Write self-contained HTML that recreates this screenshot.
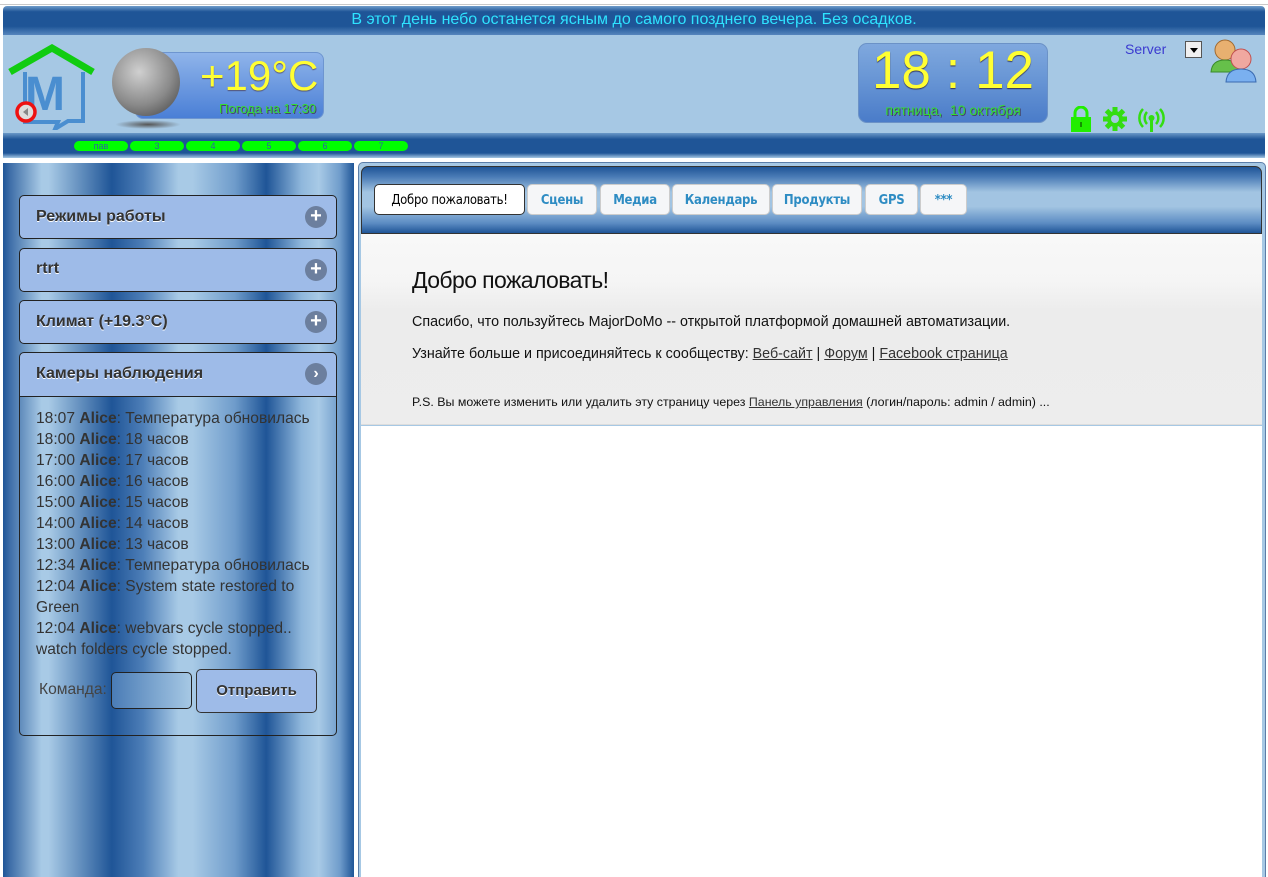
<!DOCTYPE html>
<html><head><meta charset="utf-8">
<style>
*{box-sizing:border-box;margin:0;padding:0}
body{width:1268px;height:877px;overflow:hidden;background:#fff;font-family:"Liberation Sans",Arial,sans-serif;position:relative}
.abs{position:absolute}
#topline{left:0;top:0;width:1268px;height:5px;background:#fff;border-bottom:1px solid #c8c8c8}
#banner{left:3px;top:6px;width:1262px;height:29px;background:linear-gradient(#6f9ccb 0,#1f5597 20%,#1f5597 70%,#5585bd 100%);border-radius:4px 4px 0 0;color:#2ee3ff;font-size:16px;text-align:center;line-height:28px}
#hdr{left:3px;top:35px;width:1262px;height:100px;background:#a6c8e4}
#hbar{left:3px;top:133px;width:1262px;height:25px;background:linear-gradient(#6a98c8 0,#1f5597 25%,#1f5597 80%,#a6c8e4 100%)}
.pill{position:absolute;top:141px;width:54px;height:10px;background:#00ff00;border-radius:5px;font-size:9px;color:#2a6a9a;text-align:center;line-height:10px}
#tempbox{left:135px;top:52px;width:189px;height:67px;border-radius:8px;background:linear-gradient(#8fb4ea,#4a7fd6);border:1px solid #6d95d0}
#moon{left:112px;top:48px;width:68px;height:68px;border-radius:50%;background:radial-gradient(circle at 40% 35%,#d0d0d0,#8a8a8a 55%,#3c3c3c)}
#moonsh{left:115px;top:120px;width:66px;height:9px;border-radius:50%;background:radial-gradient(ellipse,#555 0,rgba(90,90,90,0) 70%)}
#clock{left:858px;top:43px;width:190px;height:80px;border-radius:9px;background:linear-gradient(#7fa8de 0,#6b98d6 40%,#4a7cc9 100%);border:1px solid #6b92c7}
#side{left:3px;top:163px;width:351px;height:714px;background:linear-gradient(90deg,#1f5597 0,#3e6ea8 2%,#a8cae6 11%,#a8cae6 13%,#1f5597 31%,#4e7fb8 40%,#a8cae6 50%,#a8cae6 54%,#6f9ccb 66%,#1f5597 75%,#8fb7dc 85%,#a8cae6 90%,#6f9ccb 96%,#1f5597 100%)}
.acc{position:absolute;left:19px;width:318px;background:#9ebbe8;border:1px solid #222;border-radius:5px;font-weight:bold;font-size:16px;color:#333;padding-left:16px;text-shadow:0 1px 0 #fff}
.pl{position:absolute;right:9px;top:10px;width:22px;height:22px;border-radius:50%;background:#6c7f9e;color:#fff;font-size:20px;line-height:21px;text-align:center;text-shadow:none;font-weight:bold}
#cam{left:19px;top:396px;width:318px;height:340px;border:1px solid #222;border-top:none;border-radius:0 0 5px 5px;padding:12px 0 0 16px;font-size:15.6px;line-height:21px;color:#333}
#main{left:358px;top:162px;width:908px;height:715px;border:1px solid #5a7da8;border-bottom:none;border-radius:5px 5px 0 0;background:#a6c8e4}
#tabbar{left:361px;top:166px;width:901px;height:68px;border:1px solid #333;border-radius:7px 7px 0 0;background:linear-gradient(#1f5597 0,#4a7bb6 15%,#a2c4e2 38%,#a2c4e2 60%,#5c8cc3 85%,#1f5597 100%)}
.tab{position:absolute;top:184px;height:31px;border:1px solid #ccc;border-radius:5px;background:#f5f6f8;color:#2e8cc3;font-weight:bold;font-size:13px;text-align:center;line-height:32px;font-family:"DejaVu Sans Condensed","Liberation Sans Narrow",sans-serif;letter-spacing:-0.3px}
#content{left:361px;top:234px;width:901px;height:191px;background:linear-gradient(#f8f8f8 0,#f5f5f5 25%,#ececec 40%,#ededed 100%);border-bottom:1px solid #ddd;padding:30px 0 0 51px;color:#111}
#white{left:361px;top:426px;width:901px;height:451px;background:#fff}
#content a{color:#333;text-decoration:underline}
</style></head><body>
<div class="abs" id="topline"></div>
<div class="abs" id="banner">В этот день небо останется ясным до самого позднего вечера. Без осадков.</div>
<div class="abs" id="hdr"></div>
<div class="abs" id="hbar"></div>
<svg class="abs" style="left:8px;top:44px" width="88" height="86" viewBox="0 0 88 86">
<path d="M17 28 V78 H50 L47 85 L60 77 H75 V28" fill="none" stroke="#4a8ed0" stroke-width="4"/>
<text x="17" y="66" font-family="Liberation Sans" font-weight="bold" font-size="48" fill="#4a8ed0">M</text>
<path d="M2 28 L44 4 L85 28" fill="none" stroke="#11cc11" stroke-width="7"/>
<circle cx="18" cy="68" r="9" fill="#ddd" stroke="#ee1111" stroke-width="3.5"/>
<path d="M20 64 L15 68 L20 72Z" fill="#888"/>
</svg>
<div class="abs" id="tempbox"></div>
<div class="abs" style="left:200px;top:52px;font-size:42px;color:#ffff33;line-height:48px;text-shadow:0 1px 1px #557">+19°C</div>
<div class="abs" style="left:219px;top:101px;font-size:13px;color:#33dd33;text-shadow:1px 1px 0 #446">Погода на 17:30</div>
<div class="abs" id="moonsh"></div>
<div class="abs" id="moon"></div>
<div class="pill" style="left:74px">пав</div><div class="pill" style="left:130px">3</div><div class="pill" style="left:186px">4</div><div class="pill" style="left:242px">5</div><div class="pill" style="left:298px">6</div><div class="pill" style="left:354px">7</div>
<div class="abs" id="clock"></div>
<div class="abs" style="left:858px;top:42px;width:190px;text-align:center;font-size:53px;color:#ffff33;line-height:58px;text-shadow:0 1px 1px #335">18 : 12</div>
<div class="abs" style="left:858px;top:102px;width:190px;text-align:center;font-size:14px;color:#33dd33;text-shadow:1px 1px 0 #446">пятница,&nbsp; 10 октября</div>
<div class="abs" style="left:1125px;top:41px;font-size:14px;color:#3a3ad0">Server</div>
<div class="abs" style="left:1185px;top:41px;width:17px;height:17px;border:1px solid #555;background:#f0f0f0"><div style="margin:6px auto 0;width:0;height:0;border-left:4px solid transparent;border-right:4px solid transparent;border-top:5px solid #000"></div></div>
<svg class="abs" style="left:1210px;top:38px" width="48" height="46" viewBox="0 0 48 46">
<circle cx="15" cy="12" r="10" fill="#e8b070" stroke="#a06a30"/><path d="M1 34 Q2 22 15 22 Q28 22 29 34Z" fill="#66c04a" stroke="#3a8a2a"/>
<circle cx="31" cy="21" r="10" fill="#f0a8a0" stroke="#c05050"/><path d="M16 44 Q17 31 31 31 Q45 31 46 44Z" fill="#7ab0f0" stroke="#3a6ab0"/>
</svg>
<svg class="abs" style="left:1070px;top:106px" width="100" height="28" viewBox="0 0 100 28">
<rect x="1" y="11" width="20" height="15" fill="#22ee00"/><path d="M5 11 V7 A6 6 0 0 1 17 7 V11" fill="none" stroke="#22ee00" stroke-width="3"/><rect x="10" y="16" width="2" height="5" fill="#139000"/>
<g transform="translate(45,13)" fill="#33dd11"><circle r="8"/><g id="t"><rect x="-2.5" y="-12" width="5" height="6"/></g><use href="#t" transform="rotate(45)"/><use href="#t" transform="rotate(90)"/><use href="#t" transform="rotate(135)"/><use href="#t" transform="rotate(180)"/><use href="#t" transform="rotate(225)"/><use href="#t" transform="rotate(270)"/><use href="#t" transform="rotate(315)"/><circle r="4" fill="#a6c8e4"/></g>
<g stroke="#33dd11" stroke-width="2.5" fill="none"><path d="M77 6 A9 9 0 0 0 77 18"/><path d="M73 3 A13 13 0 0 0 73 21"/><path d="M86 6 A9 9 0 0 1 86 18"/><path d="M90 3 A13 13 0 0 1 90 21"/></g>
<circle cx="81.5" cy="12" r="3" fill="#33dd11"/><rect x="80" y="12" width="3" height="14" fill="#33dd11"/>
</svg>
<div class="abs" id="side"></div>
<div class="acc" style="top:195px;height:44px;line-height:42px">Режимы работы<div class="pl">+</div></div>
<div class="acc" style="top:248px;height:44px;line-height:40px">rtrt<div class="pl">+</div></div>
<div class="acc" style="top:300px;height:44px;line-height:42px">Климат (+19.3°C)<div class="pl">+</div></div>
<div class="acc" style="top:352px;height:45px;line-height:42px;border-radius:5px 5px 0 0">Камеры наблюдения<div class="pl" style="font-size:16px">›</div></div>
<div class="abs" id="cam">18:07 <b>Alice</b>: Температура обновилась<br>18:00 <b>Alice</b>: 18 часов<br>17:00 <b>Alice</b>: 17 часов<br>16:00 <b>Alice</b>: 16 часов<br>15:00 <b>Alice</b>: 15 часов<br>14:00 <b>Alice</b>: 14 часов<br>13:00 <b>Alice</b>: 13 часов<br>12:34 <b>Alice</b>: Температура обновилась<br>12:04 <b>Alice</b>: System state restored to<br>Green<br>12:04 <b>Alice</b>: webvars cycle stopped..<br>watch folders cycle stopped.</div>
<div class="abs" style="left:39px;top:681px;font-size:15.6px;color:#444">Команда:</div>
<div class="abs" style="left:111px;top:672px;width:81px;height:37px;border:1px solid #222;border-radius:5px;background:linear-gradient(90deg,#4a7cb6,#a6c8e4)"></div>
<div class="abs" style="left:196px;top:669px;width:121px;height:44px;border:1px solid #333;border-radius:5px;background:#9ebbe8;font-weight:bold;font-size:15px;color:#333;text-align:center;line-height:42px;text-shadow:0 1px 0 #fff">Отправить</div>
<div class="abs" id="main"></div>
<div class="abs" id="tabbar"></div>
<div class="tab" style="left:374px;width:151px;background:#fff;border-color:#333;color:#000;font-weight:normal">Добро пожаловать!</div>
<div class="tab" style="left:527px;width:70px">Сцены</div>
<div class="tab" style="left:600px;width:70px">Медиа</div>
<div class="tab" style="left:672px;width:98px">Календарь</div>
<div class="tab" style="left:772px;width:90px">Продукты</div>
<div class="tab" style="left:865px;width:53px">GPS</div>
<div class="tab" style="left:920px;width:47px">***</div>
<div class="abs" id="content">
<div style="font-size:23px;letter-spacing:-0.6px;margin-top:3px">Добро пожаловать!</div>
<div style="font-size:14.3px;margin-top:20px">Спасибо, что пользуйтесь MajorDoMo -- открытой платформой домашней автоматизации.</div>
<div style="font-size:14.3px;margin-top:16px">Узнайте больше и присоединяйтесь к сообществу: <a>Веб-сайт</a> | <a>Форум</a> | <a>Facebook страница</a></div>
<div style="font-size:12.4px;margin-top:33px">P.S. Вы можете изменить или удалить эту страницу через <a>Панель управления</a> (логин/пароль: admin / admin) ...</div>
</div>
<div class="abs" id="white"></div>
</body></html>
